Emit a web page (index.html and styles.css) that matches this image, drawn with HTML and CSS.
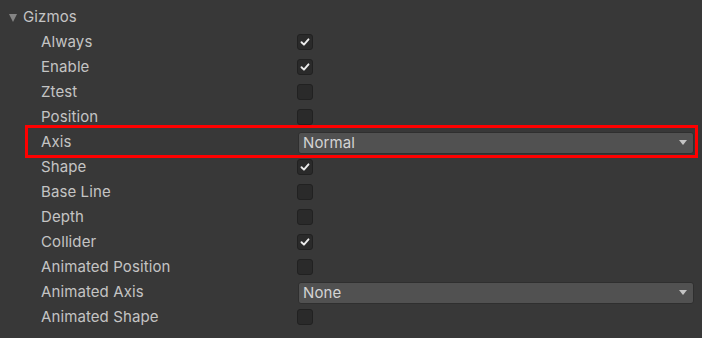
FILE: index.html
```html
<!DOCTYPE html>
<html>
<head>
    <title>Gizmos</title>
    <link rel="stylesheet" href="styles.css">
</head>
<body>
    <div class="inspector">
        <div class="foldout">
            <span class="arrow"></span>
            <span>Gizmos</span>
        </div>

        <div class="row">
            <div class="label">Always</div>
            <div class="field"><span class="toggle checked"><svg viewBox="0 0 16 16"><path d="M4 8.3 L6.8 11 L12 5"/></svg></span></div>
        </div>
        <div class="row">
            <div class="label">Enable</div>
            <div class="field"><span class="toggle checked"><svg viewBox="0 0 16 16"><path d="M4 8.3 L6.8 11 L12 5"/></svg></span></div>
        </div>
        <div class="row">
            <div class="label">Ztest</div>
            <div class="field"><span class="toggle"></span></div>
        </div>
        <div class="row">
            <div class="label">Position</div>
            <div class="field"><span class="toggle"></span></div>
        </div>
        <div class="row highlight">
            <div class="label">Axis</div>
            <div class="field"><div class="dropdown">Normal<span class="caret"></span></div></div>
        </div>
        <div class="row">
            <div class="label">Shape</div>
            <div class="field"><span class="toggle checked"><svg viewBox="0 0 16 16"><path d="M4 8.3 L6.8 11 L12 5"/></svg></span></div>
        </div>
        <div class="row">
            <div class="label">Base Line</div>
            <div class="field"><span class="toggle"></span></div>
        </div>
        <div class="row">
            <div class="label">Depth</div>
            <div class="field"><span class="toggle"></span></div>
        </div>
        <div class="row">
            <div class="label">Collider</div>
            <div class="field"><span class="toggle checked"><svg viewBox="0 0 16 16"><path d="M4 8.3 L6.8 11 L12 5"/></svg></span></div>
        </div>
        <div class="row">
            <div class="label">Animated Position</div>
            <div class="field"><span class="toggle"></span></div>
        </div>
        <div class="row">
            <div class="label">Animated Axis</div>
            <div class="field"><div class="dropdown">None<span class="caret"></span></div></div>
        </div>
        <div class="row">
            <div class="label">Animated Shape</div>
            <div class="field"><span class="toggle"></span></div>
        </div>
    </div>
</body>
</html>
```

FILE: styles.css
```css
body {
    margin: 0;
    background-color: #383838;
    font-family: Inter, "Noto Sans", sans-serif;
    font-size: 15px;
    letter-spacing: 0.1px;
    color: #c4c4c4;
}
.inspector {
    padding-top: 5px;
}
.foldout {
    height: 25px;
    display: flex;
    align-items: center;
    padding-left: 9px;
}
.foldout span:last-child {
    padding-bottom: 2px;
}
.arrow {
    width: 0;
    height: 0;
    border-left: 4.5px solid transparent;
    border-right: 4.5px solid transparent;
    border-top: 8px solid #858585;
    margin-right: 6px;
    margin-top: 1px;
}
.row {
    height: 25px;
    display: grid;
    grid-template-columns: 297px 1fr;
    align-items: center;
    position: relative;
}
.label {
    padding-left: 41px;
    padding-bottom: 2px;
}
.field {
    padding-right: 8px;
    display: flex;
    align-items: center;
}
.toggle {
    width: 14px;
    height: 14px;
    background-color: #2a2a2a;
    border: 1px solid #212121;
    border-radius: 3px;
    display: inline-block;
    margin-top: -1px;
}
.toggle svg {
    width: 14px;
    height: 14px;
    display: block;
}
.toggle path {
    fill: none;
    stroke: #ececec;
    stroke-width: 2.2;
    stroke-linecap: round;
    stroke-linejoin: round;
}
.dropdown {
    flex: 1;
    height: 19px;
    margin-left: 1px;
    background-color: #515151;
    border: 1px solid #2f2f2f;
    border-radius: 3px;
    padding-left: 4px;
    padding-bottom: 1px;
    display: flex;
    align-items: center;
    justify-content: space-between;
    color: #d4d4d4;
}
.caret {
    width: 0;
    height: 0;
    border-left: 4.5px solid transparent;
    border-right: 4.5px solid transparent;
    border-top: 5px solid #c4c4c4;
    margin-right: 6px;
    margin-top: 1px;
}
/* red annotation box */
.highlight::after {
    content: "";
    position: absolute;
    left: 25px;
    right: 4px;
    top: -5px;
    bottom: -3px;
    border: 3px solid #ff0000;
    pointer-events: none;
}
```
